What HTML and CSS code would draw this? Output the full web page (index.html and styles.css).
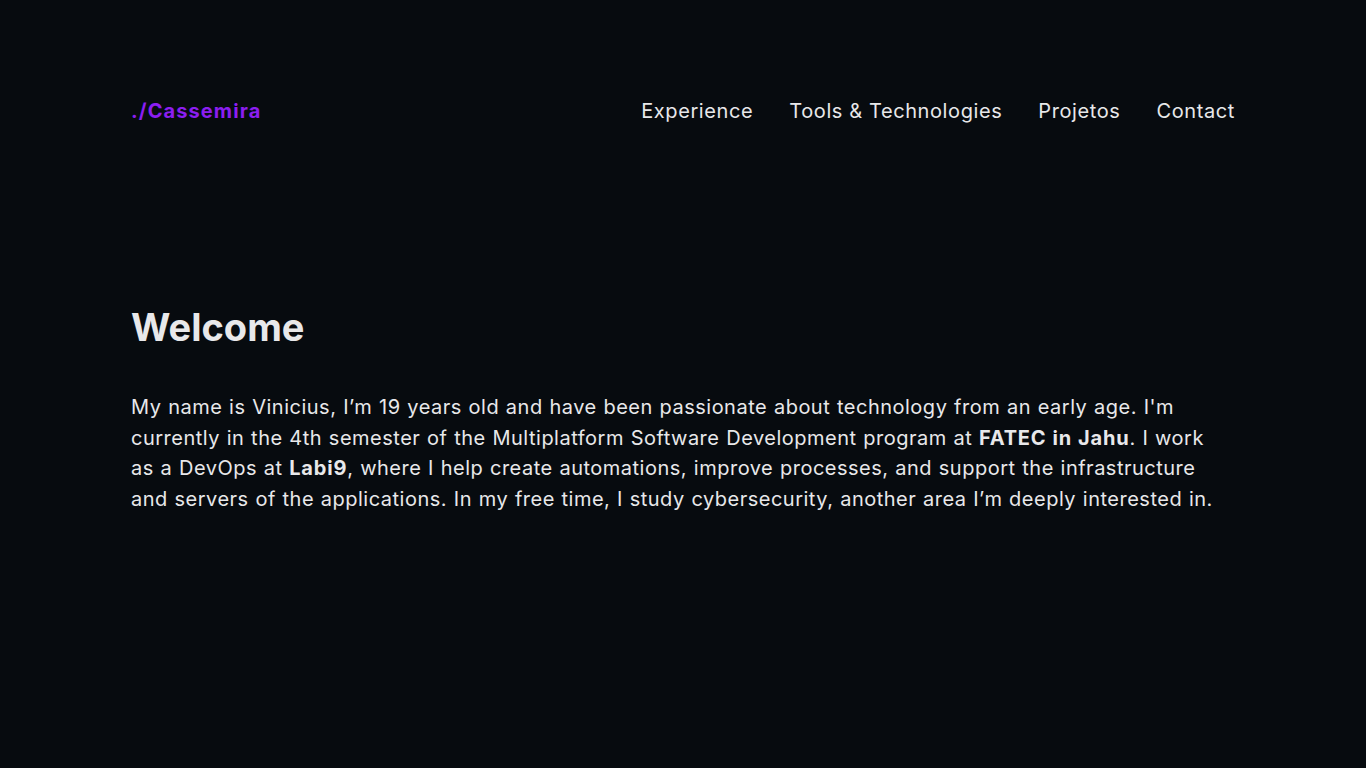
FILE: index.html
```html
<!DOCTYPE html>
<html lang="en">
<head>
<meta charset="utf-8">
<title>Cassemira</title>
<link rel="stylesheet" href="styles.css">
</head>
<body>
<div class="page">
  <header class="header">
    <a class="logo" href="#">./Cassemira</a>
    <nav class="nav">
      <a href="#">Experience</a>
      <a href="#">Tools &amp; Technologies</a>
      <a href="#">Projetos</a>
      <a href="#">Contact</a>
    </nav>
  </header>
  <main class="intro">
    <h1 class="title">Welcome</h1>
    <p class="text">My name is Vinicius, I’m 19 years old and have been passionate about technology from an early age. I'm currently in the 4th semester of the Multiplatform Software Development program at <strong>FATEC in Jahu</strong>. I work as a DevOps at <strong>Labi9</strong>, where I help create automations, improve processes, and support the infrastructure and servers of the applications. In my free time, I study cybersecurity, another area I’m deeply interested in.</p>
  </main>
</div>
</body>
</html>
```
FILE: styles.css
```css
html, body {
  margin: 0;
  padding: 0;
  background: #070b0f;
  height: 100%;
}
body {
  font-family: Inter, "Open Sans", sans-serif;
  color: #e8e8ea;
}
.page {
  max-width: 1104px;
  margin: 0 auto;
  padding: 99px 0 0;
}
.header {
  display: flex;
  justify-content: space-between;
  align-items: center;
  height: 24px;
}
.logo {
  color: #8c1ef0;
  font-weight: 700;
  font-size: 20px;
  letter-spacing: 1.1px;
  text-decoration: none;
}
.nav {
  display: flex;
  gap: 36px;
}
.nav a {
  color: #e8e8ea;
  font-size: 20px;
  letter-spacing: 0.6px;
  text-decoration: none;
}
.intro {
  padding-top: 181px;
}
.title {
  margin: 0;
  font-size: 38px;
  line-height: 46px;
  font-weight: 700;
}
.text {
  max-width: 1096px;
  margin: 42px 0 0;
  font-size: 20px;
  line-height: 30.6px;
  letter-spacing: 0.5px;
  word-spacing: 0.6px;
}
.text strong {
  font-weight: 700;
  letter-spacing: 0.8px;
}
```
